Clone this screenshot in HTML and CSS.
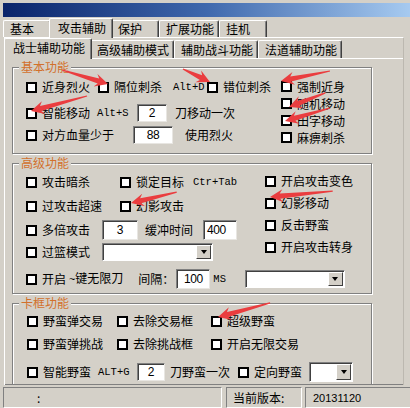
FILE: index.html
```html
<!DOCTYPE html>
<html>
<head>
<meta charset="utf-8">
<link rel="stylesheet" href="styles.css">
</head>
<body>
<div class="win">
  <div class="caption"></div>
  <div class="tabs tabs-main">
    <div class="tab">基本</div>
    <div class="tab sel">攻击辅助</div>
    <div class="tab">保护</div>
    <div class="tab">扩展功能</div>
    <div class="tab">挂机</div>
  </div>
  <div class="outer">
    <div class="tabs tabs-sub">
      <div class="tab sel">战士辅助功能</div>
      <div class="tab">高级辅助模式</div>
      <div class="tab">辅助战斗功能</div>
      <div class="tab">法道辅助功能</div>
    </div>
    <div class="inner">
      <div class="group g1">
        <span class="gtitle">基本功能</span>
        <div class="g1l">
          <div class="row h20">
            <div class="cb w72"><i class="box"></i>近身烈火</div>
            <div class="cb w109"><i class="box"></i>隔位刺杀<span class="key ml6">Alt+D</span></div>
            <div class="cb"><i class="box"></i>错位刺杀</div>
          </div>
          <div class="row h20 mt6">
            <div class="cb w71"><i class="box"></i>智能移动</div>
            <span class="key w40">Alt+S</span>
            <span class="inp w30">2</span>
            <span class="ml8">刀移动一次</span>
          </div>
          <div class="row h20 mt2">
            <div class="cb w107"><i class="box"></i>对方血量少于</div>
            <span class="inp w40">88</span>
            <span class="ml12">使用烈火</span>
          </div>
        </div>
        <div class="g1r">
          <div class="row h17"><div class="cb"><i class="box"></i>强制近身</div></div>
          <div class="row h17"><div class="cb"><i class="box"></i>随机移动</div></div>
          <div class="row h17"><div class="cb"><i class="box"></i>田字移动</div></div>
          <div class="row h17"><div class="cb"><i class="box"></i>麻痹刺杀</div></div>
        </div>
      </div>

      <div class="group g2">
        <span class="gtitle">高级功能</span>
        <div class="g2top">
          <div class="g2l">
            <div class="row h24">
              <div class="cb w94"><i class="box"></i>攻击暗杀</div>
              <div class="cb w73"><i class="box"></i>锁定目标</div>
              <span class="key">Ctr+Tab</span>
            </div>
            <div class="row h24">
              <div class="cb w94"><i class="box"></i>过攻击超速</div>
              <div class="cb"><i class="box"></i>幻影攻击</div>
            </div>
            <div class="row h24">
              <div class="cb w76"><i class="box"></i>多倍攻击</div>
              <span class="inp w36 h20">3</span>
              <span class="ml7">缓冲时间</span>
              <span class="inp w34 h20 left ml10">400</span>
            </div>
            <div class="row h20">
              <div class="cb w76"><i class="box"></i>过篮模式</div>
              <span class="combo w111"><span class="drop"></span></span>
            </div>
          </div>
          <div class="g2r">
            <div class="row h22"><div class="cb"><i class="box"></i>开启攻击变色</div></div>
            <div class="row h22"><div class="cb"><i class="box"></i>幻影移动</div></div>
            <div class="row h22"><div class="cb"><i class="box"></i>反击野蛮</div></div>
            <div class="row h22"><div class="cb"><i class="box"></i>开启攻击转身</div></div>
          </div>
        </div>
        <div class="row h20 mt7">
          <div class="cb"><i class="box"></i>开启</div>
          <span class="ml3"><span class="key">~</span>键无限刀</span>
          <span class="ml15">间隔：</span>
          <span class="inp w34 h20 ml2">100</span>
          <span class="key ml3">MS</span>
          <span class="combo w100 ml19"><span class="drop"></span></span>
        </div>
      </div>

      <div class="group g3">
        <span class="gtitle">卡框功能</span>
        <div class="row h20">
          <div class="cb w90"><i class="box"></i>野蛮弹交易</div>
          <div class="cb w94"><i class="box"></i>去除交易框</div>
          <div class="cb"><i class="box"></i>超级野蛮</div>
        </div>
        <div class="row h20 mt3">
          <div class="cb w90"><i class="box"></i>野蛮弹挑战</div>
          <div class="cb w94"><i class="box"></i>去除挑战框</div>
          <div class="cb"><i class="box"></i>开启无限交易</div>
        </div>
        <div class="row h20 mt8">
          <div class="cb w71"><i class="box"></i>智能野蛮</div>
          <span class="key w39">ALT+G</span>
          <span class="inp w28">2</span>
          <span class="ml5">刀野蛮一次</span>
          <div class="cb ml8"><i class="box"></i>定向野蛮</div>
          <span class="combo w44 h20 ml7"><span class="drop"></span></span>
        </div>
      </div>
    </div>
  </div>
  <div class="status">
    <div class="sp sp1">:</div>
    <div class="sp sp2">当前版本:</div>
    <div class="sp sp3"><span class="num">20131120</span></div>
  </div>

  <svg class="marks" width="410" height="408" viewBox="0 0 410 408">
    <g fill="#ea3d3f">
      <polygon transform="translate(108 81) rotate(16.9)" points="0,0 -13,-6.5 -10,-2.6 -48,-0.6 -48,0.6 -10,2.6 -13,6.5"/>
      <polygon transform="translate(210 79) rotate(25.7)" points="0,0 -13,-6.5 -10,-2.6 -30,-0.6 -30,0.6 -10,2.6 -13,6.5"/>
      <polygon transform="translate(281 78) rotate(168.5)" points="0,0 -13,-6.5 -10,-2.6 -50,-0.6 -50,0.6 -10,2.6 -13,6.5"/>
      <polygon transform="translate(289 104) rotate(158.7)" points="0,0 -13,-6.5 -10,-2.6 -39,-0.6 -39,0.6 -10,2.6 -13,6.5"/>
      <polygon transform="translate(285 118) rotate(163.9)" points="0,0 -13,-6.5 -10,-2.6 -47,-0.6 -47,0.6 -10,2.6 -13,6.5"/>
      <polygon transform="translate(31 108) rotate(165)" points="0,0 -13,-6.5 -10,-2.6 -58,-0.6 -58,0.6 -10,2.6 -13,6.5"/>
      <polygon transform="translate(131 200) rotate(166.6)" points="0,0 -13,-6.5 -10,-2.6 -47,-0.6 -47,0.6 -10,2.6 -13,6.5"/>
      <polygon transform="translate(270 194) rotate(174.6)" points="0,0 -13,-6.5 -10,-2.6 -63,-0.6 -63,0.6 -10,2.6 -13,6.5"/>
      <polygon transform="translate(218 314) rotate(164.9)" points="0,0 -13,-6.5 -10,-2.6 -54,-0.6 -54,0.6 -10,2.6 -13,6.5"/>
    </g>
  </svg>
</div>
</body>
</html>
```

FILE: styles.css
```css
* { box-sizing: border-box; }
html, body { margin: 0; padding: 0; }
body {
  width: 410px;
  height: 408px;
  overflow: hidden;
  background: #d4d0c8;
  font-family: "Noto Sans CJK SC", sans-serif;
  font-size: 12px;
  line-height: 14px;
  color: #000;
}
.win { position: relative; width: 410px; height: 408px; border-top: 3px solid #d4d0c8; }

.caption {
  width: 407px;
  height: 14px;
  margin-left: 3px;
  background-color: #0a246a;
  background-image: linear-gradient(to right, #0a246a 0%, #3f68ad 50%, #a6caf0 100%);
}

/* tabs */
.tabs { display: flex; align-items: flex-end; height: 20px; }
.tabs-main { padding-left: 3px; }
.tabs-sub { padding-left: 1px; }
.tab {
  height: 17px;
  min-width: 48px;
  padding: 0 4px 0 6px;
  border-top: 1px solid #fff;
  border-left: 1px solid #fff;
  border-right: 1px solid #404040;
  box-shadow: inset -1px 0 #808080;
  border-radius: 2px 2px 0 0;
  display: flex;
  align-items: center;
  white-space: nowrap;
  background: #d4d0c8;
}
.tabs-sub .tab { height: 18px; }
.tab.sel {
  height: 20px;
  margin: 0 -2px -1px;
  padding: 0 6px 2px 8px;
  position: relative;
  z-index: 1;
}
.tabs-sub .tab.sel { height: 21px; }

.outer {
  margin-left: 4px;
  width: 400px;
  border-top: 1px solid #fff;
  border-left: 1px solid #fff;
  border-right: 1px solid #bcb8b0;
}
.inner {
  height: 327px;
  border-top: 1px solid #fff;
  border-bottom: 1px solid #808080;
  padding-left: 7px;
  overflow: hidden;
}

/* group boxes */
.group {
  position: relative;
  width: 360px;
  border: 1px solid #808080;
  box-shadow: inset 1px 1px #fff, 1px 1px #fff;
}
.gtitle {
  position: absolute;
  top: -8px;
  left: 6px;
  padding: 0 2px;
  background: #d4d0c8;
  color: #d2702c;
  line-height: 14px;
}
.g1 { margin-top: 8px; height: 87px; display: flex; padding-left: 13px; }
.g1l { width: 255px; padding-top: 9px; }
.g1r { padding-top: 10px; }
.g2 { margin-top: 9px; height: 131px; padding: 6px 0 0 13px; }
.g2top { display: flex; }
.g2l { width: 239px; }
.g3 { margin-top: 9px; height: 100px; padding: 7px 0 0 14px; }

.row { display: flex; align-items: center; white-space: nowrap; }
.h17 { height: 17px; }
.h20 { height: 20px; }
.h22 { height: 22px; }
.h24 { height: 24px; }

.cb { display: flex; align-items: center; gap: 5px; flex: none; }
.box {
  display: block;
  width: 11px;
  height: 11px;
  border: 2px solid #000;
  background: #fff;
  flex: none;
}

.key {
  font-family: "Liberation Mono", monospace;
  font-size: 10.5px;
  flex: none;
}

.inp {
  display: flex;
  align-items: center;
  justify-content: center;
  height: 18px;
  background: #fff;
  border-top: 1px solid #808080;
  border-left: 1px solid #808080;
  border-bottom: 1px solid #e8e6e2;
  border-right: 1px solid #e8e6e2;
  box-shadow: inset 1px 1px #404040;
  font-family: "Liberation Sans", sans-serif;
  font-size: 12px;
  letter-spacing: -0.4px;
  flex: none;
}
.inp.left { justify-content: flex-start; padding-left: 3px; }

.combo {
  display: flex;
  justify-content: flex-end;
  height: 18px;
  padding: 1px;
  background: #fff;
  border-top: 1px solid #808080;
  border-left: 1px solid #808080;
  border-bottom: 1px solid #fff;
  border-right: 1px solid #fff;
  box-shadow: inset 1px 1px #404040;
  flex: none;
}
.drop {
  width: 15px;
  display: flex;
  align-items: center;
  justify-content: center;
  background: #d4d0c8;
  border-top: 1px solid #fff;
  border-left: 1px solid #fff;
  border-right: 1px solid #404040;
  border-bottom: 1px solid #404040;
}
.drop::after {
  content: "";
  border-left: 3.5px solid transparent;
  border-right: 3.5px solid transparent;
  border-top: 4px solid #000;
}

/* widths and spacing */
.w28 { width: 28px; }
.w30 { width: 30px; }
.w34 { width: 34px; }
.w36 { width: 36px; }
.w39 { width: 39px; }
.w40 { width: 40px; }
.w44 { width: 44px; }
.w71 { width: 71px; }
.w72 { width: 72px; }
.w73 { width: 73px; }
.w76 { width: 76px; }
.w90 { width: 90px; }
.w94 { width: 94px; }
.w100 { width: 100px; }
.w107 { width: 107px; }
.w109 { width: 109px; }
.w111 { width: 111px; }
.combo.h20, .inp.h20 { height: 20px; }
.ml2 { margin-left: 2px; }
.ml3 { margin-left: 3px; }
.ml5 { margin-left: 5px; }
.ml6 { margin-left: 6px; }
.ml7 { margin-left: 7px; }
.ml8 { margin-left: 8px; }
.ml10 { margin-left: 10px; }
.ml12 { margin-left: 12px; }
.ml15 { margin-left: 15px; }
.ml19 { margin-left: 19px; }
.mt2 { margin-top: 2px; }
.mt3 { margin-top: 3px; }
.mt6 { margin-top: 6px; }
.mt7 { margin-top: 7px; }
.mt8 { margin-top: 8px; }

/* status bar */
.status { display: flex; margin-top: 2px; height: 21px; }
.sp {
  display: flex;
  align-items: center;
  border-top: 1px solid #808080;
  border-left: 1px solid #808080;
  border-right: 1px solid #fff;
  border-bottom: 1px solid #fff;
  flex: none;
}
.sp1 { margin-left: 3px; width: 219px; padding-left: 33px; }
.sp2 { margin-left: 4px; width: 76px; padding-left: 6px; }
.sp3 { margin-left: 3px; width: 110px; padding-left: 7px; }
.num { font-family: "Liberation Sans", sans-serif; font-size: 11px; }

.marks { position: absolute; left: 0; top: 0; pointer-events: none; }
```
